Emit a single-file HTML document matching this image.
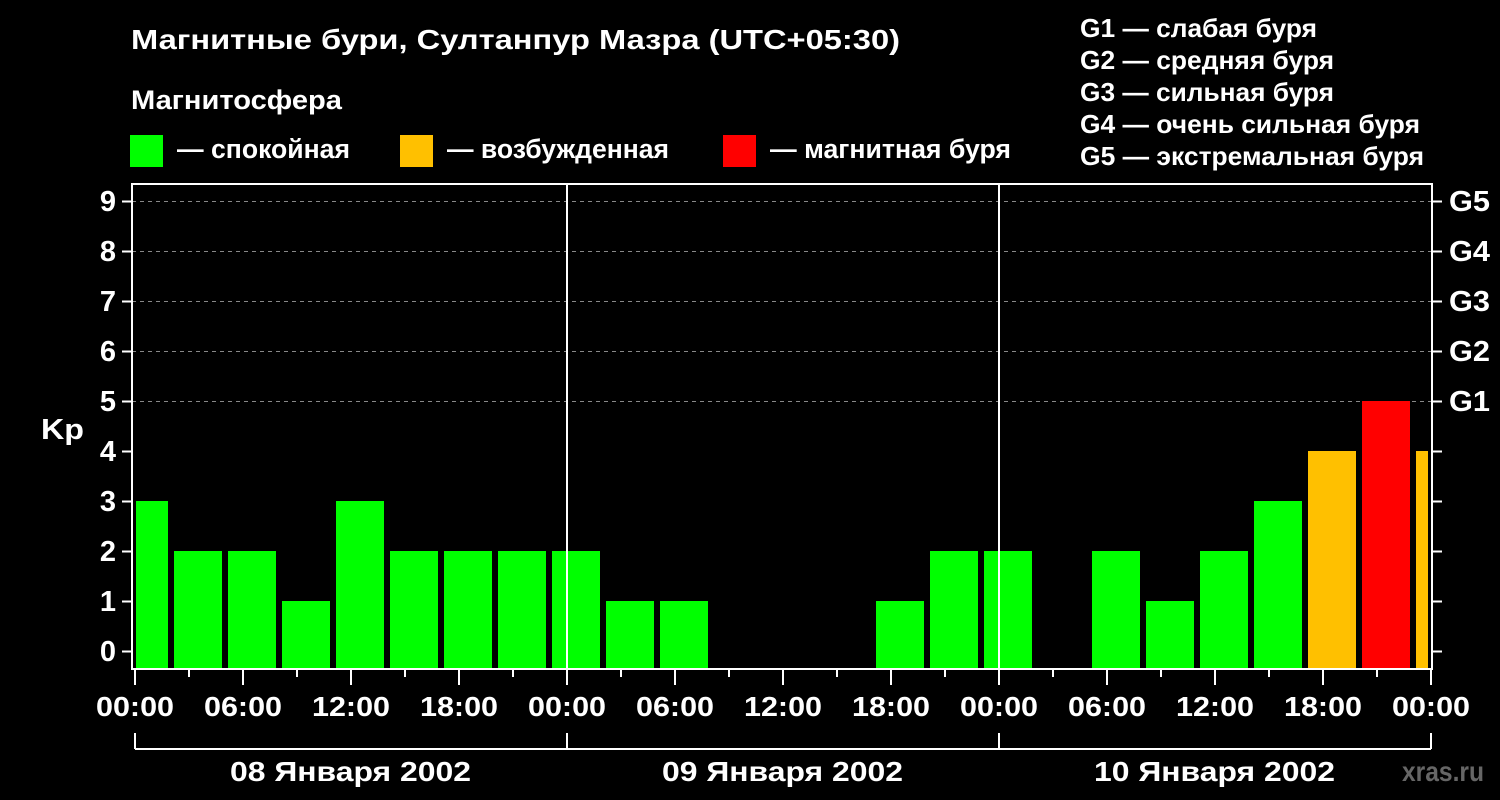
<!DOCTYPE html>
<html><head><meta charset="utf-8"><style>
html,body{margin:0;padding:0;background:#000;width:1500px;height:800px;overflow:hidden}
svg{display:block}
text{font-family:"Liberation Sans",sans-serif;font-weight:bold;fill:#fff}
</style></head><body>
<svg width="1500" height="800" xmlns="http://www.w3.org/2000/svg">
<text x="131" y="49" font-size="28" textLength="769" lengthAdjust="spacingAndGlyphs">Магнитные бури, Султанпур Мазра (UTC+05:30)</text>
<text x="131" y="109" font-size="27" textLength="211" lengthAdjust="spacingAndGlyphs">Магнитосфера</text>
<rect x="130" y="135" width="33" height="32" fill="#00ff00"/>
<text x="177" y="158" font-size="27" textLength="173" lengthAdjust="spacingAndGlyphs">— спокойная</text>
<rect x="400" y="135" width="33" height="32" fill="#ffc000"/>
<text x="447" y="158" font-size="27" textLength="222" lengthAdjust="spacingAndGlyphs">— возбужденная</text>
<rect x="723" y="135" width="33" height="32" fill="#ff0000"/>
<text x="770" y="158" font-size="27" textLength="241" lengthAdjust="spacingAndGlyphs">— магнитная буря</text>
<g font-size="26">
<text x="1080" y="37" textLength="237" lengthAdjust="spacingAndGlyphs">G1 — слабая буря</text>
<text x="1080" y="69" textLength="254" lengthAdjust="spacingAndGlyphs">G2 — средняя буря</text>
<text x="1080" y="101" textLength="254" lengthAdjust="spacingAndGlyphs">G3 — сильная буря</text>
<text x="1080" y="133" textLength="340" lengthAdjust="spacingAndGlyphs">G4 — очень сильная буря</text>
<text x="1080" y="165" textLength="344" lengthAdjust="spacingAndGlyphs">G5 — экстремальная буря</text>
</g>
<g stroke="#888" stroke-width="1" stroke-dasharray="4,4">
<line x1="132" y1="201.5" x2="1432" y2="201.5"/>
<line x1="132" y1="251.5" x2="1432" y2="251.5"/>
<line x1="132" y1="301.5" x2="1432" y2="301.5"/>
<line x1="132" y1="351.5" x2="1432" y2="351.5"/>
<line x1="132" y1="401.5" x2="1432" y2="401.5"/>
</g>
<g>
<rect x="136" y="501" width="32" height="167" fill="#00ff00"/>
<rect x="174" y="551" width="48" height="117" fill="#00ff00"/>
<rect x="228" y="551" width="48" height="117" fill="#00ff00"/>
<rect x="282" y="601" width="48" height="67" fill="#00ff00"/>
<rect x="336" y="501" width="48" height="167" fill="#00ff00"/>
<rect x="390" y="551" width="48" height="117" fill="#00ff00"/>
<rect x="444" y="551" width="48" height="117" fill="#00ff00"/>
<rect x="498" y="551" width="48" height="117" fill="#00ff00"/>
<rect x="552" y="551" width="48" height="117" fill="#00ff00"/>
<rect x="606" y="601" width="48" height="67" fill="#00ff00"/>
<rect x="660" y="601" width="48" height="67" fill="#00ff00"/>
<rect x="876" y="601" width="48" height="67" fill="#00ff00"/>
<rect x="930" y="551" width="48" height="117" fill="#00ff00"/>
<rect x="984" y="551" width="48" height="117" fill="#00ff00"/>
<rect x="1092" y="551" width="48" height="117" fill="#00ff00"/>
<rect x="1146" y="601" width="48" height="67" fill="#00ff00"/>
<rect x="1200" y="551" width="48" height="117" fill="#00ff00"/>
<rect x="1254" y="501" width="48" height="167" fill="#00ff00"/>
<rect x="1308" y="451" width="48" height="217" fill="#ffc000"/>
<rect x="1362" y="401" width="48" height="267" fill="#ff0000"/>
<rect x="1416" y="451" width="12" height="217" fill="#ffc000"/>
</g>
<g stroke="#fff" stroke-width="2" fill="none">
<rect x="132" y="184" width="1300" height="485"/>
<line x1="567" y1="184" x2="567" y2="669"/>
<line x1="999" y1="184" x2="999" y2="669"/>
</g>
<g stroke="#fff" stroke-width="2">
<path d="M122 201.5h10M122 251.5h10M122 301.5h10M122 351.5h10M122 401.5h10M122 451.5h10M122 501.5h10M122 551.5h10M122 601.5h10M122 651.5h10"/>
<path d="M1432 201.5h10M1432 251.5h10M1432 301.5h10M1432 351.5h10M1432 401.5h10M1432 451.5h10M1432 501.5h10M1432 551.5h10M1432 601.5h10M1432 651.5h10"/>
<path d="M135 669v16M243 669v16M351 669v16M459 669v16M567 669v16M675 669v16M783 669v16M891 669v16M999 669v16M1107 669v16M1215 669v16M1323 669v16M1431 669v16"/>
<path d="M189 669v8M297 669v8M405 669v8M513 669v8M621 669v8M729 669v8M837 669v8M945 669v8M1053 669v8M1161 669v8M1269 669v8M1377 669v8"/>
<path d="M135 733v16M567 733v16M999 733v16M1431 733v16M135 749H1431"/>
</g>
<g font-size="29" text-anchor="end">
<text x="116" y="211">9</text><text x="116" y="261">8</text><text x="116" y="311">7</text><text x="116" y="361">6</text><text x="116" y="411">5</text><text x="116" y="461">4</text><text x="116" y="511">3</text><text x="116" y="561">2</text><text x="116" y="611">1</text><text x="116" y="661">0</text>
</g>
<text x="41" y="439" font-size="29" textLength="43" lengthAdjust="spacingAndGlyphs">Kp</text>
<g font-size="29">
<text x="1449" y="211" textLength="41" lengthAdjust="spacingAndGlyphs">G5</text><text x="1449" y="261" textLength="41" lengthAdjust="spacingAndGlyphs">G4</text><text x="1449" y="311" textLength="41" lengthAdjust="spacingAndGlyphs">G3</text><text x="1449" y="361" textLength="41" lengthAdjust="spacingAndGlyphs">G2</text><text x="1449" y="411" textLength="41" lengthAdjust="spacingAndGlyphs">G1</text>
</g>
<g font-size="28">
<text x="96" y="716" textLength="78" lengthAdjust="spacingAndGlyphs">00:00</text><text x="204" y="716" textLength="78" lengthAdjust="spacingAndGlyphs">06:00</text><text x="312" y="716" textLength="78" lengthAdjust="spacingAndGlyphs">12:00</text><text x="420" y="716" textLength="78" lengthAdjust="spacingAndGlyphs">18:00</text>
<text x="528" y="716" textLength="78" lengthAdjust="spacingAndGlyphs">00:00</text><text x="636" y="716" textLength="78" lengthAdjust="spacingAndGlyphs">06:00</text><text x="744" y="716" textLength="78" lengthAdjust="spacingAndGlyphs">12:00</text><text x="852" y="716" textLength="78" lengthAdjust="spacingAndGlyphs">18:00</text>
<text x="960" y="716" textLength="78" lengthAdjust="spacingAndGlyphs">00:00</text><text x="1068" y="716" textLength="78" lengthAdjust="spacingAndGlyphs">06:00</text><text x="1176" y="716" textLength="78" lengthAdjust="spacingAndGlyphs">12:00</text><text x="1284" y="716" textLength="78" lengthAdjust="spacingAndGlyphs">18:00</text>
<text x="1392" y="716" textLength="78" lengthAdjust="spacingAndGlyphs">00:00</text>
<text x="230" y="781" textLength="241" lengthAdjust="spacingAndGlyphs">08 Января 2002</text>
<text x="662" y="781" textLength="241" lengthAdjust="spacingAndGlyphs">09 Января 2002</text>
<text x="1094" y="781" textLength="241" lengthAdjust="spacingAndGlyphs">10 Января 2002</text>
</g>
<text x="1402" y="781" font-size="28" textLength="82" lengthAdjust="spacingAndGlyphs" style="fill:#666">xras.ru</text>
</svg>
</body></html>
